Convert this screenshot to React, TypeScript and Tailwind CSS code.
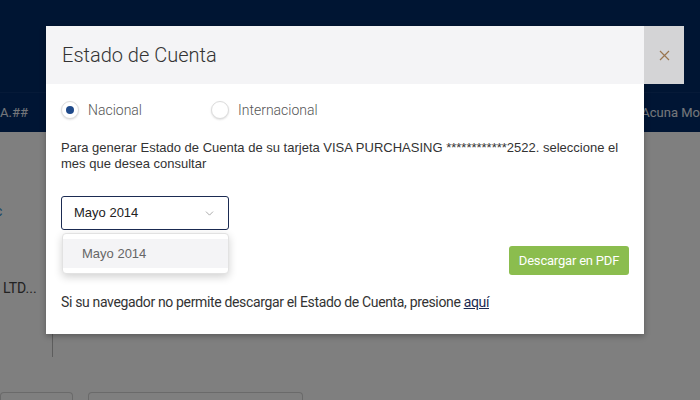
import { ChevronDown } from "lucide-react";

function Radio({ checked, label }: { checked?: boolean; label: string }) {
  return (
    <label className="flex items-center gap-[9px]">
      <span className="flex h-[18px] w-[18px] items-center justify-center rounded-full border border-[#dcdcdc] bg-white shadow-[0_1px_2px_rgba(0,0,0,0.12)]">
        {checked && <span className="h-[8px] w-[8px] rounded-full bg-[#1f4a8a]" />}
      </span>
      <span className="font-['Roboto'] text-[14px] font-light text-[#555]">{label}</span>
    </label>
  );
}

export default function App() {
  return (
    <div className="relative h-[400px] w-[700px] overflow-hidden bg-white font-['Roboto',sans-serif]">
      {/* page behind the modal */}
      <div className="h-[92px] bg-[#002a66]" />
      <div className="flex h-[40px] items-center justify-between border-t border-[#0c3470] bg-[#002a68] text-[13px] text-[#e8edf5]">
        <span>A.##</span>
        <span className="whitespace-nowrap">Acuna Mo</span>
      </div>
      <div className="h-[35px] bg-white" />
      <div className="bg-[#fefefe]">
        <div className="-ml-[5px] pt-[34px] text-[14px] text-[#1e88c8]">c</div>
        <div className="mt-[56px] pl-[3px] text-[14px] text-[#444]">LTD...</div>
        <div className="mt-[22px] flex">
          <div className="ml-[52px] mt-[8px] h-[28px] w-px bg-[#bbb]" />
          <div className="ml-[15px] h-[9px] w-[177px] rounded-b-[4px] border border-t-0 border-[#d0d0d0]" />
        </div>
        <div className="mt-[35px] flex gap-[15px]">
          <div className="h-[20px] w-[73px] rounded-t-[4px] border border-b-0 border-[#d4d4d4]" />
          <div className="h-[20px] w-[215px] rounded-t-[4px] border border-b-0 border-[#d4d4d4]" />
        </div>
      </div>

      <div className="absolute inset-0 bg-black/50" />

      {/* modal */}
      <div className="absolute left-[46px] top-[26px] w-[598px] bg-white shadow-[0_2px_6px_rgba(0,0,0,0.3)]">
        <div className="relative flex h-[58px] items-center bg-[#f4f4f6] pl-[16px]">
          <h2 className="text-[20px] font-light text-[#333]">Estado de Cuenta</h2>
          <button className="absolute -right-[40px] top-0 flex h-[58px] w-[40px] items-center justify-center bg-[#d4d4d6]">
            <svg width="11" height="11" viewBox="0 0 11 11">
              <path d="M1 1 L10 10 M10 1 L1 10" stroke="#9a7650" strokeWidth="1.2" />
            </svg>
          </button>
        </div>

        <div className="px-[15px] pb-[22px]">
          <div className="mt-[17px] flex h-[18px] items-center">
            <Radio checked label="Nacional" />
            <div className="ml-[69px]">
              <Radio label="Internacional" />
            </div>
          </div>

          <p className="mt-[21px] font-['Liberation_Sans',Arial,sans-serif] text-[13px] leading-[16px] text-[#333]">
            Para generar Estado de Cuenta de su tarjeta VISA PURCHASING ************2522. seleccione el mes que desea consultar
          </p>

          <div className="relative mt-[24px] w-[168px]">
            <div className="flex h-[34px] items-center justify-between rounded-[3px] border border-[#1b2b52] pl-[12px] pr-[12px] font-['Liberation_Sans',Arial,sans-serif] text-[13px] text-[#222]">
              <span>Mayo 2014</span>
              <ChevronDown size={13} strokeWidth={1.3} className="text-[#888]" />
            </div>
            <div className="absolute left-[1px] right-0 top-[37px] z-10 rounded-[4px] border border-[#e2e2e2] bg-white py-[5px] shadow-[0_3px_8px_rgba(0,0,0,0.18)]">
              <div className="flex h-[29px] items-center bg-[#f4f4f6] pl-[19px] font-['Liberation_Sans',Arial,sans-serif] text-[13px] text-[#666]">
                Mayo 2014
              </div>
            </div>
          </div>

          <div className="mt-[16px] flex justify-end">
            <button className="flex h-[29px] w-[120px] items-center justify-center rounded-[3px] bg-[#8bbd4e] text-[13px] tracking-[-0.2px] text-white">
              Descargar en PDF
            </button>
          </div>

          <p className="mt-[17px] text-[14px] leading-[20px] tracking-[-0.35px] text-[#333]">
            Si su navegador no permite descargar el Estado de Cuenta, presione{" "}
            <a className="text-[#1b2a52] underline">aquí</a>
          </p>
        </div>
      </div>
    </div>
  );
}
